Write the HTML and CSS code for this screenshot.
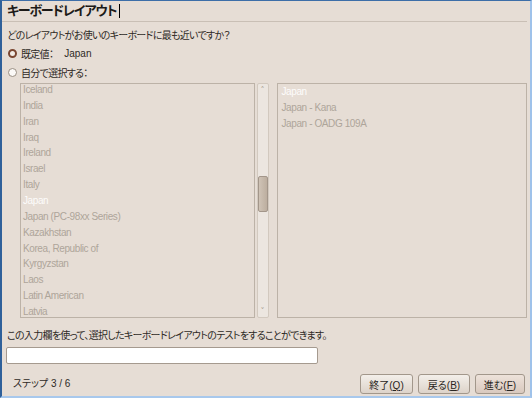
FILE: index.html
```html
<!DOCTYPE html>
<html>
<head>
  <title>キーボードレイアウト</title>
  <link rel="stylesheet" href="styles.css">
</head>
<body>
  <div class="window">
    <div class="title-bar">
      <h1>キーボードレイアウト<span class="caret"></span></h1>
    </div>

    <div class="content">
      <p class="question">どのレイアウトがお使いのキーボードに最も近いですか？</p>

      <div class="radio-row">
        <span class="radio checked"></span>
        <span class="jp">既定値：</span>
        <span class="default-value">Japan</span>
      </div>
      <div class="radio-row">
        <span class="radio"></span>
        <span class="jp">自分で選択する：</span>
      </div>

      <div class="lists">
        <div class="list-box countries">
          <ul class="list scrolled">
            <li>Iceland</li>
            <li>India</li>
            <li>Iran</li>
            <li>Iraq</li>
            <li>Ireland</li>
            <li>Israel</li>
            <li>Italy</li>
            <li class="selected">Japan</li>
            <li>Japan (PC-98xx Series)</li>
            <li>Kazakhstan</li>
            <li>Korea, Republic of</li>
            <li>Kyrgyzstan</li>
            <li>Laos</li>
            <li>Latin American</li>
            <li>Latvia</li>
          </ul>
        </div>
        <div class="scrollbar">
          <span class="arrow up">&#x2C4;</span>
          <span class="thumb"></span>
          <span class="arrow down">&#x2C5;</span>
        </div>
        <div class="list-box variants">
          <ul class="list">
            <li class="selected">Japan</li>
            <li>Japan - Kana</li>
            <li>Japan - OADG 109A</li>
          </ul>
        </div>
      </div>

      <p class="test-label">この入力欄を使って、選択したキーボードレイアウトのテストをすることができます。</p>
      <input type="text" class="test-input">
    </div>

    <div class="footer">
      <span class="step">ステップ 3 / 6</span>
      <div class="buttons">
        <button class="btn">終了(<u>Q</u>)</button>
        <button class="btn">戻る(<u>B</u>)</button>
        <button class="btn default">進む(<u>F</u>)</button>
      </div>
    </div>
  </div>
</body>
</html>
```

FILE: styles.css
```css
body {
  margin: 0;
  padding: 0;
  font-family: "Liberation Sans", "Noto Sans CJK JP", sans-serif;
  font-size: 10px;
  font-feature-settings: "palt";
  color: #2e2a26;
  background-color: #e6ddd5;
}

.window {
  box-sizing: border-box;
  width: 532px;
  height: 398px;
  display: flex;
  flex-direction: column;
  background-color: #e6ddd5;
  border-top: 1px solid #3d6ea8;
  border-left: 2px solid #2f609a;
  border-right: 2px solid #9fc2ea;
  border-bottom: 2px solid #a8c8ec;
}

.title-bar {
  height: 20px;
  margin-right: 3px;
  border-bottom: 1px solid #c9bfb5;
}

h1 {
  margin: 0;
  padding-left: 5px;
  font-size: 13px;
  line-height: 20px;
  font-weight: bold;
  letter-spacing: -1.1px;
  color: #1c1a18;
  display: flex;
  align-items: center;
}

.caret {
  display: inline-block;
  width: 1px;
  height: 14px;
  margin-left: 3px;
  background-color: #000;
}

.content {
  padding: 0 3px 0 5px;
}

.question,
.test-label,
.jp {
  letter-spacing: -0.7px;
}

.question {
  margin: 8px 0 0 0;
  line-height: 12px;
}

.radio-row {
  display: flex;
  align-items: center;
  height: 12px;
  margin-top: 5px;
}

.radio-row + .radio-row {
  margin-top: 7px;
}

.radio {
  box-sizing: border-box;
  width: 9px;
  height: 9px;
  margin: 0 4px 0 1px;
  border-radius: 50%;
  border: 1px solid #9a8f84;
  background-color: #fbf9f7;
}

.radio.checked {
  border: 2.5px solid #7a4631;
  background-color: #f2ece6;
}

.default-value {
  margin-left: 11px;
}

.lists {
  display: flex;
  height: 235px;
  margin-top: 5px;
  padding-left: 13px;
}

.list-box {
  box-sizing: border-box;
  height: 235px;
  overflow: hidden;
  border: 1px solid #bcb2a7;
}

.countries {
  width: 235px;
}

.variants {
  width: 251px;
  margin-left: 8px;
}

.list {
  list-style: none;
  margin: 0;
  padding: 0 0 0 2px;
  font-size: 10px;
  letter-spacing: -0.4px;
  line-height: 15.86px;
  color: #aea59a;
}

.list.scrolled {
  margin-top: -2px;
}

.variants .list {
  padding-left: 4px;
  line-height: 16px;
}

.list .selected {
  color: #fdfcfb;
}

.scrollbar {
  box-sizing: border-box;
  position: relative;
  width: 12px;
  height: 235px;
  margin-left: 2px;
  border: 1px solid #d2c9bf;
  border-radius: 2px;
  background-color: #ece6e0;
}

.arrow {
  position: absolute;
  left: 0;
  width: 10px;
  text-align: center;
  font-family: "DejaVu Sans", sans-serif;
  font-size: 8px;
  line-height: 8px;
  color: #a99e93;
}

.arrow.up {
  top: 3px;
}

.arrow.down {
  bottom: 1px;
}

.thumb {
  position: absolute;
  left: 0;
  top: 92px;
  box-sizing: border-box;
  width: 10px;
  height: 36px;
  border: 1px solid #a3968a;
  border-radius: 2px;
  background: linear-gradient(to right, #cfc3b6, #bcae9f);
}

.test-label {
  margin: 12px 0 0 0;
  line-height: 12px;
}

.test-input {
  display: block;
  box-sizing: border-box;
  width: 312px;
  height: 17px;
  margin: 5px 0 0 -1px;
  border: 1px solid #a59a8f;
  border-radius: 2px;
  background-color: #fff;
}

.footer {
  display: flex;
  justify-content: space-between;
  align-items: center;
  margin-top: 10px;
  padding: 0 5px 0 11px;
}

.step {
  line-height: 12px;
}

.buttons {
  display: flex;
  gap: 5px;
}

.btn {
  box-sizing: border-box;
  height: 20px;
  padding: 0;
  font-family: inherit;
  font-size: 10px;
  font-feature-settings: "palt";
  color: #2a2622;
  border: 1px solid #a2978b;
  border-radius: 3px;
  background: linear-gradient(to bottom, #f3efea, #ddd3c9);
  cursor: pointer;
}

.btn:nth-child(1) {
  width: 53px;
}

.btn:nth-child(2) {
  width: 52px;
}

.btn.default {
  width: 50px;
  background: linear-gradient(to bottom, #ede2da, #d9c9be);
}
```
